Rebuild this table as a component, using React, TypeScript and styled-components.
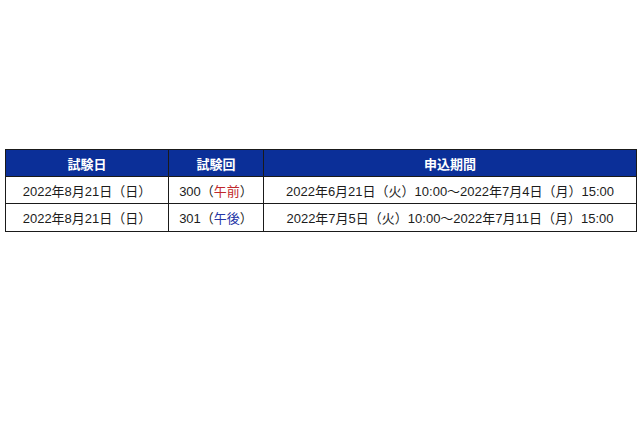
import React from "react";
import styled, { createGlobalStyle } from "styled-components";

const Global = createGlobalStyle`
  html, body { margin: 0; padding: 0; background: #ffffff; }
  body { font-family: "Liberation Sans", Arial, "Noto Sans CJK JP", sans-serif; }
`;

const Page = styled.div`
  width: 640px;
  height: 426px;
  padding: 149px 0 0 5px;
  box-sizing: border-box;
`;

const Table = styled.table`
  border-collapse: collapse;
  width: 631px;
  table-layout: fixed;
  font-size: 13px;
  color: #1c1c1c;
`;

const Th = styled.th`
  background: #0b2f98;
  color: #ffffff;
  font-weight: bold;
  height: 27px;
  padding: 0;
  border: 1px solid #1a1a1a;
  text-align: center;
  vertical-align: middle;
  box-sizing: border-box;
`;

const Row = styled.tr<{ $h: number }>`
  height: ${(p) => p.$h}px;
`;

const Td = styled.td`
  padding: 0;
  border: 1px solid #1a1a1a;
  text-align: center;
  vertical-align: middle;
  white-space: nowrap;
  box-sizing: border-box;
`;

const Mark = styled.span<{ $tone: "am" | "pm" }>`
  color: ${(p) => (p.$tone === "am" ? "#c0282a" : "#2335a6")};
`;

const rows = [
  { h: 27, date: "2022年8月21日（日）", no: "300", tone: "am" as const, label: "午前", period: "2022年6月21日（火）10:00～2022年7月4日（月）15:00" },
  { h: 28, date: "2022年8月21日（日）", no: "301", tone: "pm" as const, label: "午後", period: "2022年7月5日（火）10:00～2022年7月11日（月）15:00" },
];

export default function App() {
  return (
    <>
      <Global />
      <Page>
        <Table>
          <colgroup>
            <col style={{ width: 163 }} />
            <col style={{ width: 95 }} />
            <col style={{ width: 373 }} />
          </colgroup>
          <thead>
            <tr>
              <Th>試験日</Th>
              <Th>試験回</Th>
              <Th>申込期間</Th>
            </tr>
          </thead>
          <tbody>
            {rows.map((r) => (
              <Row key={r.no} $h={r.h}>
                <Td>{r.date}</Td>
                <Td>
                  {r.no}（<Mark $tone={r.tone}>{r.label}</Mark>）
                </Td>
                <Td>{r.period}</Td>
              </Row>
            ))}
          </tbody>
        </Table>
      </Page>
    </>
  );
}
